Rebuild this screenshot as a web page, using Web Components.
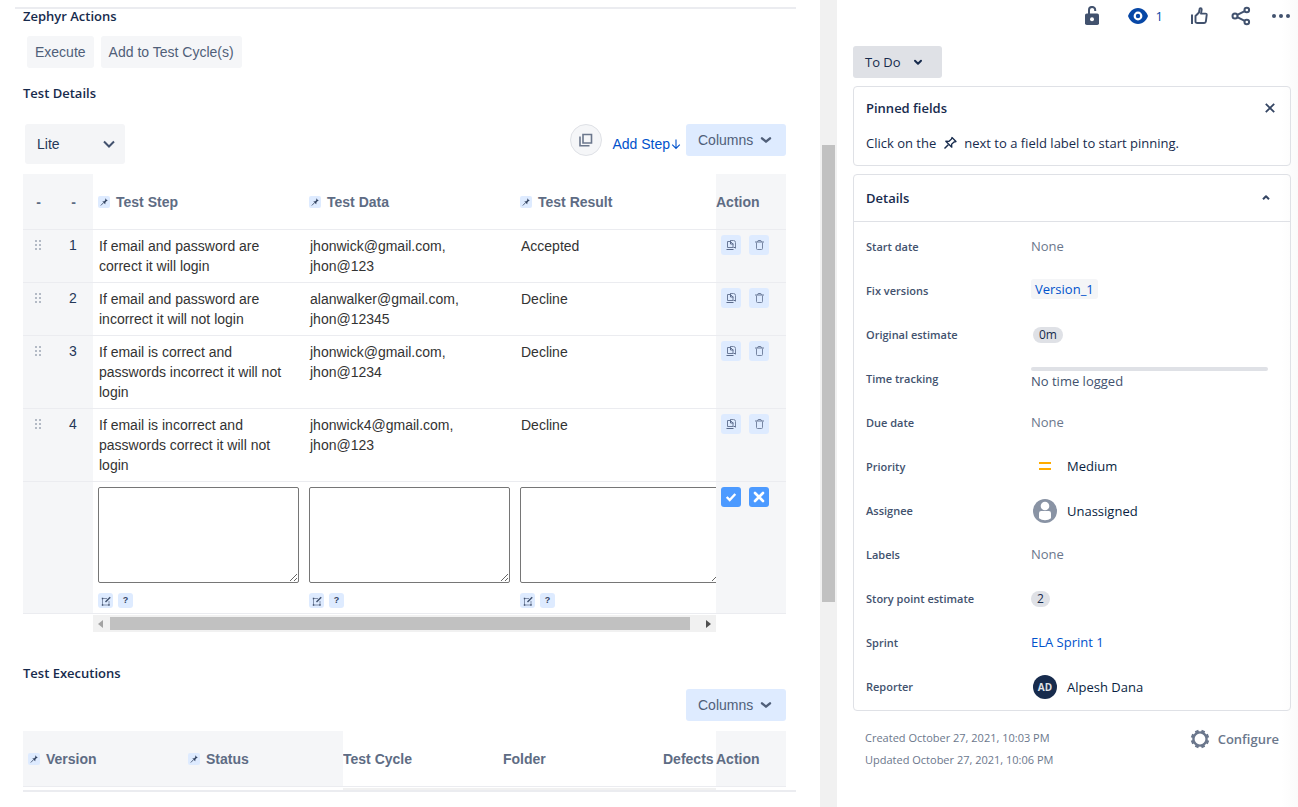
<!DOCTYPE html>
<html lang="en">
<head>
<meta charset="utf-8">
<title>Zephyr test issue</title>
<style>
  body { margin: 0; background: #fff; font-family: "Open Sans", "Noto Sans", sans-serif; font-size: 13px; line-height: 20px; color: #172b4d; }
</style>
</head>
<body>
<issue-page></issue-page>
<script>
const define = (name, render) => customElements.define(name, class extends HTMLElement {
  connectedCallback() {
    if (this.shadowRoot) return;
    this.attachShadow({ mode: 'open' }).innerHTML = render(this);
  }
});

const BASE = `*{box-sizing:border-box} button,select,textarea{font:inherit;color:inherit;margin:0} button{border:0;padding:0;background:none;cursor:pointer} a{text-decoration:none;color:#0052cc} h2{margin:0}`;

/* name: [width, height, markup on a matching viewBox] */
const ICONS = {
  pinned: [12, 12, '<path d="M7 2.200l2.800 2.600-1.100.3-1.200 1.200-.3 2L4.300 5.600l2-.3 1.100-1.400z" fill="#344563"/><path d="M5.500 6.700L2.800 9.500" stroke="#344563" stroke-width=".8"/>'],
  chevron: [16, 16, '<path d="M4 6.300l4 3.400 4-3.400" fill="none" stroke="currentColor" stroke-width="2.400" stroke-linecap="round" stroke-linejoin="round"/>'],
  wide: [16, 16, '<path d="M3 5.500l5 5 5-5" fill="none" stroke="#42526e" stroke-width="2"/>'],
  small: [16, 16, '<path d="M5 6.700l3 3 3-3" fill="none" stroke="currentColor" stroke-width="2" stroke-linecap="round" stroke-linejoin="round"/>'],
  up: [16, 16, '<path d="M5 9.300l3-3 3 3" fill="none" stroke="currentColor" stroke-width="2" stroke-linejoin="round"/>'],
  stack: [16, 16, '<path d="M5 2.500h8.500v8.500H5z" fill="none" stroke="currentColor" stroke-width="1.600"/><path d="M2 4.500v9.300H11.500" fill="none" stroke="currentColor" stroke-width="1.600"/>'],
  arrow: [10, 12, '<path d="M5 1.500v9M1.200 6.700L5 10.500l3.800-3.800" fill="none" stroke="currentColor" stroke-width="1.100"/>'],
  drag: [6, 10, '<path d="M0 0h2v2H0zM4 0h2v2H4zM0 4h2v2H0zM4 4h2v2H4zM0 8h2v2H0zM4 8h2v2H4z" fill="#b3bac5"/>'],
  copy: [12, 12, '<path d="M5 1.500h3.500q2 0 2 2v6" fill="none" stroke="#7786a3"/><path d="M2.500 2.500h3l2.500 2.500v3.500H2.500z" fill="#deebff" stroke="#6b7a99"/><path d="M5.500 2v3h3M1.500 10.500h7M8.500 8.500h2" fill="none" stroke="#5b6b8c"/>'],
  trash: [12, 12, '<path d="M2 3h9M4.500 3l.7-1.500h2.600L8.500 3" fill="none" stroke="#6b7a99"/><path d="M3.500 3.500v6q0 1 1 1h4q1 0 1-1v-6" fill="none" stroke="#7786a3"/>'],
  edit: [12, 12, '<path d="M7 3.500H2.500v6.500H9V6" fill="none" stroke="#7786a3" stroke-width=".9"/><path d="M5.500 7L10.200 2.200" stroke="#42526e" stroke-width="1.500"/><path d="M1.800 2.800h1.400v1.400H1.800zM1.800 9.300h1.400v1.400H1.800zM8.300 9.300h1.400v1.400H8.300z" fill="#42526e"/>'],
  check: [16, 16, '<path d="M3.700 8l3 3L12.300 5" fill="none" stroke="#fff" stroke-width="2.400"/>'],
  cancel: [16, 16, '<path d="M4 4l8 8M12 4l-8 8" fill="none" stroke="#fff" stroke-width="2.600" stroke-linecap="round"/>'],
  close: [16, 16, '<path d="M3.800 3.800l8.400 8.400M12.200 3.800l-8.400 8.400" fill="none" stroke="currentColor" stroke-width="1.800"/>'],
  lock: [20, 20, '<rect x="3" y="7.500" width="14" height="11.500" rx="1.800" fill="currentColor"/><circle cx="10" cy="13.300" r="2" fill="#fff"/><path d="M7 8V4a3 3 0 0 1 6.200 0v1" fill="none" stroke="currentColor" stroke-width="2"/>'],
  eye: [20, 16, '<path d="M10 0C4.800 0 1.500 4 0 8c1.500 4 4.800 8 10 8s8.500-4 10-8c-1.500-4-4.800-8-10-8z" fill="currentColor"/><circle cx="10" cy="8" r="3.300" fill="none" stroke="#fff" stroke-width="2.200"/>'],
  like: [18, 18, '<path d="M2 7.500v9.500" stroke="currentColor" stroke-width="2"/><path d="M5.500 14.500V9L9 5.500l.5-3.300q.1-1 1-1 1.200 0 1.200 1.400l-.7 4h4.500q1.300 0 1.200 1.300l-.8 6.500q-.2 1.600-1.700 1.600H7.500q-2 0-2-1.500z" fill="none" stroke="currentColor" stroke-width="1.900" stroke-linejoin="round"/>'],
  share: [20, 20, '<g fill="none" stroke="currentColor" stroke-width="2"><circle cx="4" cy="10" r="2.500"/><circle cx="15.800" cy="4" r="2.300"/><circle cx="15.800" cy="16" r="2.300"/><path d="M6.300 8.800l7.400-3.700M6.300 11.200l7.400 3.700"/></g>'],
  more: [20, 20, '<g fill="currentColor"><circle cx="3" cy="10" r="2"/><circle cx="10" cy="10" r="2"/><circle cx="17" cy="10" r="2"/></g>'],
  pin: [14, 14, '<path d="M9 1.500l4 4-2 .5-2.400 2.200.2 3-6-6 3 .2L8.500 3z" fill="none" stroke="currentColor" stroke-width="1.300" stroke-linejoin="round"/><path d="M5.300 8.700L1.500 12.500" stroke="currentColor" stroke-width="1.500"/>'],
  medium: [16, 16, '<path d="M2 4h12v2H2zM2 10h12v2H2z" fill="#ffab00"/>'],
  person: [24, 24, '<circle cx="12" cy="12" r="12" fill="#8993a4"/><circle cx="12" cy="7" r="4.300" fill="#fff"/><path d="M6 14.200q0-2.200 2.200-2.200h7.600q2.200 0 2.200 2.200v5q-2.500 2-6 2t-6-2z" fill="#fff"/>'],
  gear: [20, 20, '<circle cx="10" cy="10" r="6.600" fill="none" stroke="currentColor" stroke-width="2.400"/><g stroke="currentColor" stroke-width="3.600"><path d="M10 .8v2.400M10 16.800v2.400M.8 10h2.400M16.800 10h2.400" transform="rotate(22.500 10 10)"/><path d="M10 .8v2.400M10 16.800v2.400M.8 10h2.400M16.800 10h2.400" transform="rotate(67.500 10 10)"/></g>']
};
define('ui-icon', el => {
  const [w, h, body] = ICONS[el.getAttribute('name')];
  return `<style>:host{display:inline-flex;flex:none}svg{display:block}</style><svg width="${w}" height="${h}" viewBox="0 0 ${w} ${h}" aria-hidden="true">${body}</svg>`;
});

define('soft-button', () => `<style>${BASE}
  :host{display:block}
  button{height:32px;padding:0 8px;border-radius:3px;background:#f5f6f8;color:#505f79;font:14px/32px "Liberation Sans",Arial,sans-serif}
</style><button type="button"><slot></slot></button>`);

define('columns-button', () => `<style>${BASE}
  :host{display:block}
  button{display:flex;align-items:center;gap:5px;width:100px;height:32px;padding:0 12px;border-radius:3px;background:#deebff;color:#505f79;font:14px/32px "Liberation Sans",Arial,sans-serif}
</style><button type="button" aria-haspopup="true">Columns<ui-icon name="chevron"></ui-icon></button>`);

define('mini-button', el => `<style>${BASE}
  :host{display:inline-flex}
  button{display:flex;align-items:center;justify-content:center;width:20px;height:20px;border-radius:3px;background:#deebff;color:#344563}
  :host([size=small]) button{width:15px;height:15px;font:bold 9px/15px "Liberation Sans",Arial,sans-serif}
  :host([size=tiny]) button{width:12px;height:12px;border-radius:2px}
  :host([primary]) button{background:#4c9aff}
</style><button type="button" aria-label="${el.getAttribute('label')}"><slot></slot></button>`);

define('section-title', () => `<style>${BASE}
  :host{display:block} h2{font-size:13px;line-height:14px;font-weight:600}
</style><h2><slot></slot></h2>`);

const TABLE = `${BASE}
  :host{display:block;font:14px/20px "Liberation Sans",Arial,sans-serif}
  table{width:100%;border-collapse:separate;border-spacing:0;table-layout:fixed}
  th,td{padding:0;border-bottom:1px solid #ebecf0;text-align:left;vertical-align:top;overflow:hidden}
  th{height:56px;vertical-align:middle;color:#5e6c84;white-space:nowrap}
  .fixed{background:#f5f6f8}
  .action{width:70px}
  .label{display:flex;align-items:center;gap:6px;padding-left:5px}`;
const pinned = t => `<span class="label"><mini-button size="tiny" label="Pin ${t}"><ui-icon name="pinned"></ui-icon></mini-button>${t}</span>`;

const STEPS = [
  ['If email and password are correct it will login', 'jhonwick@gmail.com, jhon@123', 'Accepted'],
  ['If email and password are incorrect it will not login', 'alanwalker@gmail.com, jhon@12345', 'Decline'],
  ['If email is correct and passwords incorrect it will not login', 'jhonwick@gmail.com, jhon@1234', 'Decline'],
  ['If email is incorrect and passwords correct it will not login', 'jhonwick4@gmail.com, jhon@123', 'Decline']
];
define('test-steps', () => `<style>${TABLE}
  .narrow{width:35px;text-align:center}
  th.narrow{padding-right:4px}
  .wide{width:211px}
  td{color:#333;padding:6px}
  td.narrow{padding:5px 5px 5px 0;color:#253858}
  td.grip{padding-top:10px;line-height:0}
  td.action{padding:5px}
  .buttons{display:flex;gap:8px}
  td.edit{padding:5px}
  textarea{display:block;width:201px;height:96px;border:1px solid #767676;border-radius:2px;background:#fff}
  .tools{display:flex;gap:5px;margin-top:10px}
</style>
<table>
  <thead><tr><th class="narrow fixed">-</th><th class="narrow fixed">-</th><th class="wide">${pinned('Test Step')}</th><th class="wide">${pinned('Test Data')}</th><th>${pinned('Test Result')}</th><th class="action fixed">Action</th></tr></thead>
  <tbody>
  ${STEPS.map((s, i) => `<tr><td class="narrow grip fixed"><ui-icon name="drag"></ui-icon></td><td class="narrow fixed">${i + 1}</td>${s.map(t => `<td>${t}</td>`).join('')}<td class="action fixed"><div class="buttons"><mini-button label="Clone step"><ui-icon name="copy"></ui-icon></mini-button><mini-button label="Delete step"><ui-icon name="trash"></ui-icon></mini-button></div></td></tr>`).join('')}
  <tr><td class="fixed"></td><td class="fixed"></td>
  ${['Test Step', 'Test Data', 'Test Result'].map(n => `<td class="edit"><textarea aria-label="${n}"></textarea><div class="tools"><mini-button size="small" label="Expand editor"><ui-icon name="edit"></ui-icon></mini-button><mini-button size="small" label="Help">?</mini-button></div></td>`).join('')}
  <td class="action fixed"><div class="buttons"><mini-button primary label="Save"><ui-icon name="check"></ui-icon></mini-button><mini-button primary label="Cancel"><ui-icon name="cancel"></ui-icon></mini-button></div></td></tr>
  </tbody>
</table>`);

define('test-executions', () => `<style>${TABLE}
  .col{width:160px}
</style>
<table><thead><tr><th class="col fixed">${pinned('Version')}</th><th class="col fixed">${pinned('Status')}</th><th class="col">Test Cycle</th><th class="col">Folder</th><th>Defects</th><th class="action fixed">Action</th></tr></thead></table>`);

define('row-scroller', () => `<style>${BASE}
  :host{display:flex;align-items:center;height:17px;background:#f1f1f1}
  i{width:0;height:0;border:4px solid transparent}
  .left{border-right:5px solid #a3a3a3;border-left:0;margin-left:5px}
  .right{border-left:5px solid #505050;border-right:0;margin:0 5px 0 16px}
  .thumb{flex:1;height:13px;background:#c1c1c1;margin-left:7px}
</style><i class="left"></i><span class="thumb"></span><i class="right"></i>`);

define('page-scroller', () => `<style>
  :host{display:grid;grid-template-rows:145fr 457fr 205fr;background:#f1f1f1;padding:0 2px}
  span{grid-row:2;background:#c1c1c1}
</style><span></span>`);

define('test-panel', () => `<style>${BASE}
  :host{display:block;padding:7px 24px 0 15px}
  .top{border-top:2px solid #ebecf0;padding:0 10px 0 8px}
  .actions{display:flex;gap:7px;padding:13px 4px 18px}
  .toolbar{display:flex;align-items:flex-start;padding:24px 0 10px 2px}
  .mode{position:relative;flex:none}
  select{appearance:none;width:100px;height:40px;border:0;border-radius:3px;background:#f4f5f7;padding:0 12px;font:14px/20px "Liberation Sans",Arial,sans-serif;color:#253858}
  .mode ui-icon{position:absolute;right:8px;top:12px;pointer-events:none}
  .round{display:flex;align-items:center;justify-content:center;width:32px;height:32px;border:1px solid #dfe1e6;border-radius:16px;background:#f5f6f8;color:#6b778c;margin-left:auto}
  .add{display:flex;align-items:center;gap:1px;margin:10px 5px 0 10px;font:14px/20px "Liberation Sans",Arial,sans-serif}
  row-scroller{margin:1px 70px 34px}
  .right{display:flex;justify-content:flex-end;padding:9px 0 10px}
  .bottom{margin-left:8px;border-bottom:2px solid #ebecf0;padding-right:10px}
  .track{height:2px;margin:1px 70px 0 320px;background:#f1f1f1}
</style>
<div class="top">
  <section-title>Zephyr Actions</section-title>
  <div class="actions"><soft-button>Execute</soft-button><soft-button>Add to Test Cycle(s)</soft-button></div>
  <section-title>Test Details</section-title>
  <div class="toolbar">
    <div class="mode"><select aria-label="View mode"><option>Lite</option></select><ui-icon name="wide"></ui-icon></div>
    <button class="round" type="button" aria-label="Copy steps"><ui-icon name="stack"></ui-icon></button>
    <a class="add" href="#add">Add Step<ui-icon name="arrow"></ui-icon></a>
    <columns-button></columns-button>
  </div>
  <test-steps></test-steps>
  <row-scroller></row-scroller>
  <section-title>Test Executions</section-title>
  <div class="right"><columns-button></columns-button></div>
</div>
<div class="bottom"><test-executions></test-executions><div class="track"></div></div>`);

define('field-row', el => `<style>
  :host{display:grid;grid-template-columns:165px minmax(0,1fr);align-items:center;height:44px;padding:0 22px 0 12px}
  .name{font-size:11px;font-weight:600;color:#42526e;line-height:16px}
  .value{display:flex;align-items:center}
</style><span class="name">${el.getAttribute('name')}</span><div class="value"><slot></slot></div>`);

define('details-card', () => `<style>${BASE}
  :host{display:block;border:1px solid #dfe1e6;border-radius:4px;padding-bottom:1px}
  header{display:flex;align-items:center;justify-content:space-between;height:47px;padding:0 16px 0 12px;border-bottom:1px solid #dfe1e6;margin-bottom:3px}
  h2{font-size:13px;font-weight:600}
  header button{display:flex;color:#344563}
  .plain{padding-bottom:2px}
  .none{color:#6b778c}
  .tag{background:#f4f5f7;border-radius:3px;padding:0 4px;margin-bottom:4px}
  .pill{background:#dfe1e6;border-radius:8px;padding:0 6px;line-height:16px;font-size:12px}
  .gap{margin-left:2px}
  .track{flex:1}
  .bar{height:4px;border-radius:2px;background:#dfe1e6}
  .logged{color:#42526e}
  .who{display:flex;align-items:center;gap:10px;padding-left:2px;color:#091e42}
  .who.prio{gap:14px;padding:0 0 2px 6px}
  .avatar{width:24px;height:24px;border-radius:12px;background:#172b4d;color:#dfe1e6;font-size:10px;line-height:24px;font-weight:700;text-align:center}
</style>
<header><h2>Details</h2><button type="button" aria-label="Collapse details"><ui-icon name="up"></ui-icon></button></header>
<field-row name="Start date"><span class="plain none">None</span></field-row>
<field-row name="Fix versions"><a class="tag" href="#version">Version_1</a></field-row>
<field-row name="Original estimate"><span class="pill gap">0m</span></field-row>
<field-row name="Time tracking"><div class="track"><div class="bar"></div><span class="logged">No time logged</span></div></field-row>
<field-row name="Due date"><span class="plain none">None</span></field-row>
<field-row name="Priority"><span class="who prio"><ui-icon name="medium"></ui-icon>Medium</span></field-row>
<field-row name="Assignee"><span class="who"><ui-icon name="person"></ui-icon>Unassigned</span></field-row>
<field-row name="Labels"><span class="plain none">None</span></field-row>
<field-row name="Story point estimate"><span class="pill">2</span></field-row>
<field-row name="Sprint"><a class="plain" href="#sprint">ELA Sprint 1</a></field-row>
<field-row name="Reporter"><span class="who"><span class="avatar">AD</span>Alpesh Dana</span></field-row>`);

define('pinned-card', () => `<style>${BASE}
  :host{display:block;border:1px solid #dfe1e6;border-radius:4px;padding:11px 12px 12px}
  header{display:flex;align-items:center;justify-content:space-between}
  h2{font-size:13px;font-weight:600}
  button{display:flex;color:#344563}
  p{display:flex;align-items:center;gap:7px;margin:15px 0 0}
</style>
<header><h2>Pinned fields</h2><button type="button" aria-label="Dismiss"><ui-icon name="close"></ui-icon></button></header>
<p><span>Click on the</span><ui-icon name="pin"></ui-icon><span>next to a field label to start pinning.</span></p>`);

define('issue-side', () => `<style>${BASE}
  :host{display:block;padding:0 7px 0 16px;background:linear-gradient(to left,#fafafa,#fff 16px)}
  nav{display:flex;align-items:center;justify-content:flex-end;height:32px;color:#42526e}
  nav button{display:flex;align-items:center}
  .watch{color:#0747a6;gap:8px;margin:0 27px 0 26px}
  .share{margin:0 20px 0 23px}
  .status{display:flex;align-items:center;gap:9px;height:32px;padding:0 16px 0 12px;margin:14px 0 8px;border-radius:3px;background:#dfe1e6;font-weight:500}
  details-card{margin:8px 0 16px}
  footer{display:flex;justify-content:space-between;align-items:flex-start;padding:0 12px;color:#6b778c;font-size:11px;line-height:22px}
  footer button{display:flex;align-items:center;gap:8px;font-size:13px;line-height:24px;font-weight:600}
</style>
<nav aria-label="Issue actions">
  <button type="button" aria-label="Restrictions"><ui-icon name="lock"></ui-icon></button>
  <button class="watch" type="button" aria-label="Watchers"><ui-icon name="eye"></ui-icon>1</button>
  <button type="button" aria-label="Vote"><ui-icon name="like"></ui-icon></button>
  <button class="share" type="button" aria-label="Share"><ui-icon name="share"></ui-icon></button>
  <button type="button" aria-label="More"><ui-icon name="more"></ui-icon></button>
</nav>
<button class="status" type="button">To Do<ui-icon name="small"></ui-icon></button>
<pinned-card></pinned-card>
<details-card></details-card>
<footer><div>Created October 27, 2021, 10:03 PM<br>Updated October 27, 2021, 10:06 PM</div><button type="button"><ui-icon name="gear"></ui-icon>Configure</button></footer>`);

define('issue-page', () => `<style>
  :host{display:grid;grid-template-columns:minmax(0,820fr) 17px minmax(0,461fr);min-height:100vh}
</style><test-panel></test-panel><page-scroller></page-scroller><issue-side></issue-side>`);
</script>
</body>
</html>
